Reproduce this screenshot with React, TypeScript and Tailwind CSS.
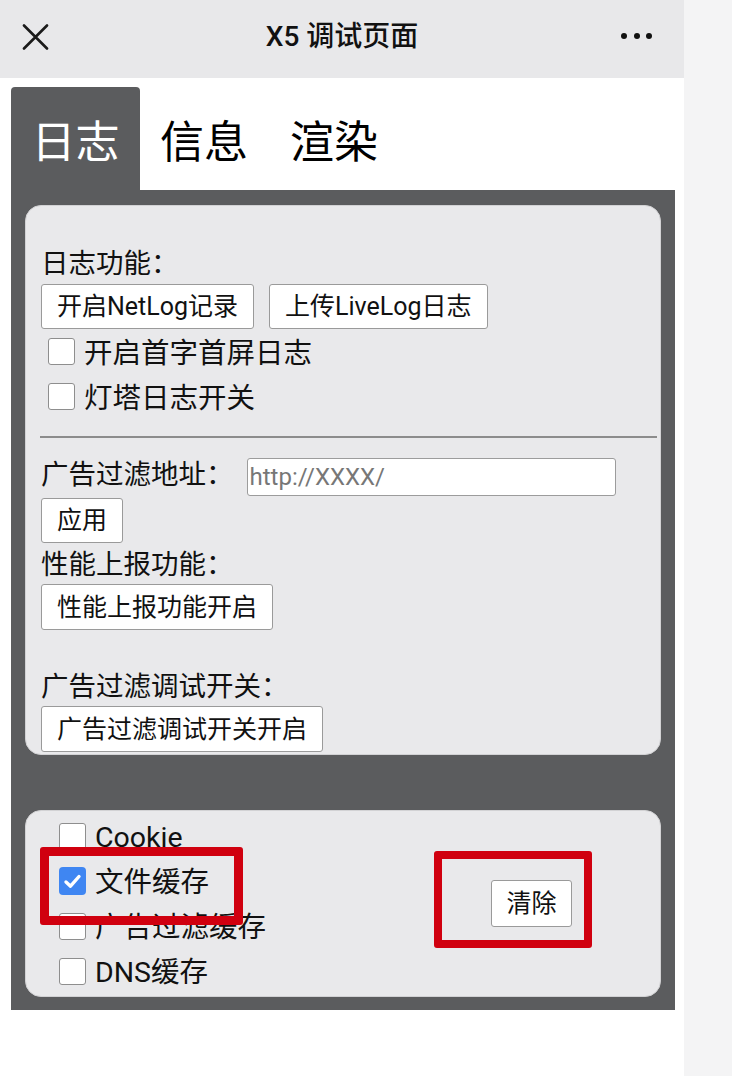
import React from "react";

const FONT = { fontFamily: '"Roboto", "Noto Sans CJK SC", "Noto Sans", sans-serif' };

function Box({ checked = false }: { checked?: boolean }) {
  if (checked) {
    return (
      <div className="w-[27px] h-[28px] rounded-[4px] bg-[#3f86f2] flex items-center justify-center shrink-0">
        <svg width="19" height="17" viewBox="0 0 19 17">
          <path d="M3 9 L7.5 13.2 L16 3.5" fill="none" stroke="#ffffff" strokeWidth="3.4" strokeLinecap="round" strokeLinejoin="round" />
        </svg>
      </div>
    );
  }
  return <div className="w-[27px] h-[27px] rounded-[3px] bg-white border-[1.5px] border-[#8e8e8e] shrink-0" />;
}

function Btn({ children, h = "h-[46px]" }: { children: React.ReactNode; h?: string }) {
  return (
    <div className={`${h} px-[15px] flex items-center bg-white border border-[#9a9a9a] rounded-[3px] text-[25px] text-[#111] leading-none whitespace-nowrap`}>
      {children}
    </div>
  );
}

function Row({ checked = false, label, left = "pl-[22px]", drop = "pt-[6px]" }: { checked?: boolean; label: string; left?: string; drop?: string }) {
  return (
    <div className={`h-[45px] flex items-center ${left}`}>
      <Box checked={checked} />
      <span className={`ml-[9px] text-[28.5px] leading-none text-[#111] ${drop}`}>{label}</span>
    </div>
  );
}

export default function App() {
  return (
    <div className="relative flex w-[732px] min-h-[1076px] bg-[#f4f4f5]" style={FONT}>
      <div className="w-[684px] bg-white flex flex-col">
        {/* header */}
        <div className="relative h-[78px] bg-[#e8e8ea] flex items-center justify-center">
          <svg className="absolute left-[22px] top-[24px]" width="27" height="26" viewBox="0 0 27 26">
            <path d="M2 1.5 L25 24.5 M25 1.5 L2 24.5" stroke="#1a1a1a" strokeWidth="2.6" strokeLinecap="round" />
          </svg>
          <span className="text-[28px] font-medium text-[#111] leading-none -mt-[4px]">X5 调试页面</span>
          <div className="absolute left-[621px] top-[33px] flex gap-[6.5px]">
            <div className="w-[6px] h-[6px] rounded-full bg-[#111]" />
            <div className="w-[6px] h-[6px] rounded-full bg-[#111]" />
            <div className="w-[6px] h-[6px] rounded-full bg-[#111]" />
          </div>
        </div>

        {/* body */}
        <div className="pl-[11px] pt-[9px]">
          <div className="flex h-[103px]">
            <div className="w-[129px] bg-[#5b5c5e] rounded-t-[4px] flex items-center justify-center pt-[8px]">
              <span className="text-[44px] leading-none text-white">日志</span>
            </div>
            <div className="px-[20px] flex items-center pt-[8px]">
              <span className="text-[44px] leading-none text-black">信息</span>
            </div>
            <div className="pl-[22px] flex items-center pt-[8px]">
              <span className="text-[44px] leading-none text-black">渲染</span>
            </div>
          </div>

          <div className="w-[664px] bg-[#5b5c5e] px-[14px] pt-[15px] pb-[13px]">
            {/* card 1 */}
            <div className="h-[550px] bg-[#e9e9eb] border border-[#d2d2d4] rounded-[16px] flex flex-col pl-[15px] text-[#111]">
              <div className="mt-[39px] h-[38px] flex items-center text-[27.5px] leading-none">日志功能：</div>
              <div className="mt-[1px] flex gap-[15px]">
                <Btn h="h-[45px]">开启NetLog记录</Btn>
                <Btn h="h-[45px]">上传LiveLog日志</Btn>
              </div>
              <Row label="开启首字首屏日志" left="pl-[7px]" />
              <Row label="灯塔日志开关" left="pl-[7px]" />
              <div className="mt-[17px] -ml-[1px] w-[617px] h-[2px] bg-[#8c8c8c]" />
              <div className="mt-[20px] h-[38px] flex items-center">
                <span className="text-[27.5px] leading-none -mt-[5px]">广告过滤地址：</span>
                <div className="ml-[13px] w-[369px] h-[38px] bg-white border-[1.5px] border-[#9c9c9c] rounded-[3px] flex items-center pl-[2px] text-[24px] text-[#777] leading-none">
                  http://XXXX/
                </div>
              </div>
              <div className="mt-[2px] flex">
                <Btn h="h-[45px]">应用</Btn>
              </div>
              <div className="mt-[3px] h-[38px] flex items-center text-[27.5px] leading-none">性能上报功能：</div>
              <div className="flex">
                <Btn h="h-[46px]">性能上报功能开启</Btn>
              </div>
              <div className="mt-[38px] h-[38px] flex items-center text-[27.5px] leading-none">广告过滤调试开关：</div>
              <div className="flex">
                <Btn h="h-[46px]">广告过滤调试开关开启</Btn>
              </div>
            </div>

            {/* card 2 */}
            <div className="mt-[55px] h-[187px] bg-[#e9e9eb] border border-[#d2d2d4] rounded-[16px] flex items-center">
              <div className="flex flex-col">
                <Row label="Cookie" left="pl-[33px]" drop="pt-[4px]" />
                <Row label="文件缓存" checked left="pl-[33px]" drop="pt-[4px]" />
                <Row label="广告过滤缓存" left="pl-[33px]" drop="pt-[4px]" />
                <Row label="DNS缓存" left="pl-[33px]" drop="pt-[4px]" />
              </div>
              <div className="ml-auto mr-[88px]">
                <div className="w-[81px] h-[47px] flex items-center justify-center bg-white border border-[#9a9a9a] rounded-[3px] text-[25px] leading-none text-[#111]">
                  清除
                </div>
              </div>
            </div>
          </div>
        </div>
      </div>
      <div className="w-[48px]" />

      {/* annotation boxes */}
      <div className="absolute left-[40px] top-[847px] w-[203px] h-[78px] border-[9px] border-[#d0000f] rounded-[3px]" />
      <div className="absolute left-[434px] top-[851px] w-[158px] h-[97px] border-[8px] border-[#d0000f] rounded-[3px]" />
    </div>
  );
}
